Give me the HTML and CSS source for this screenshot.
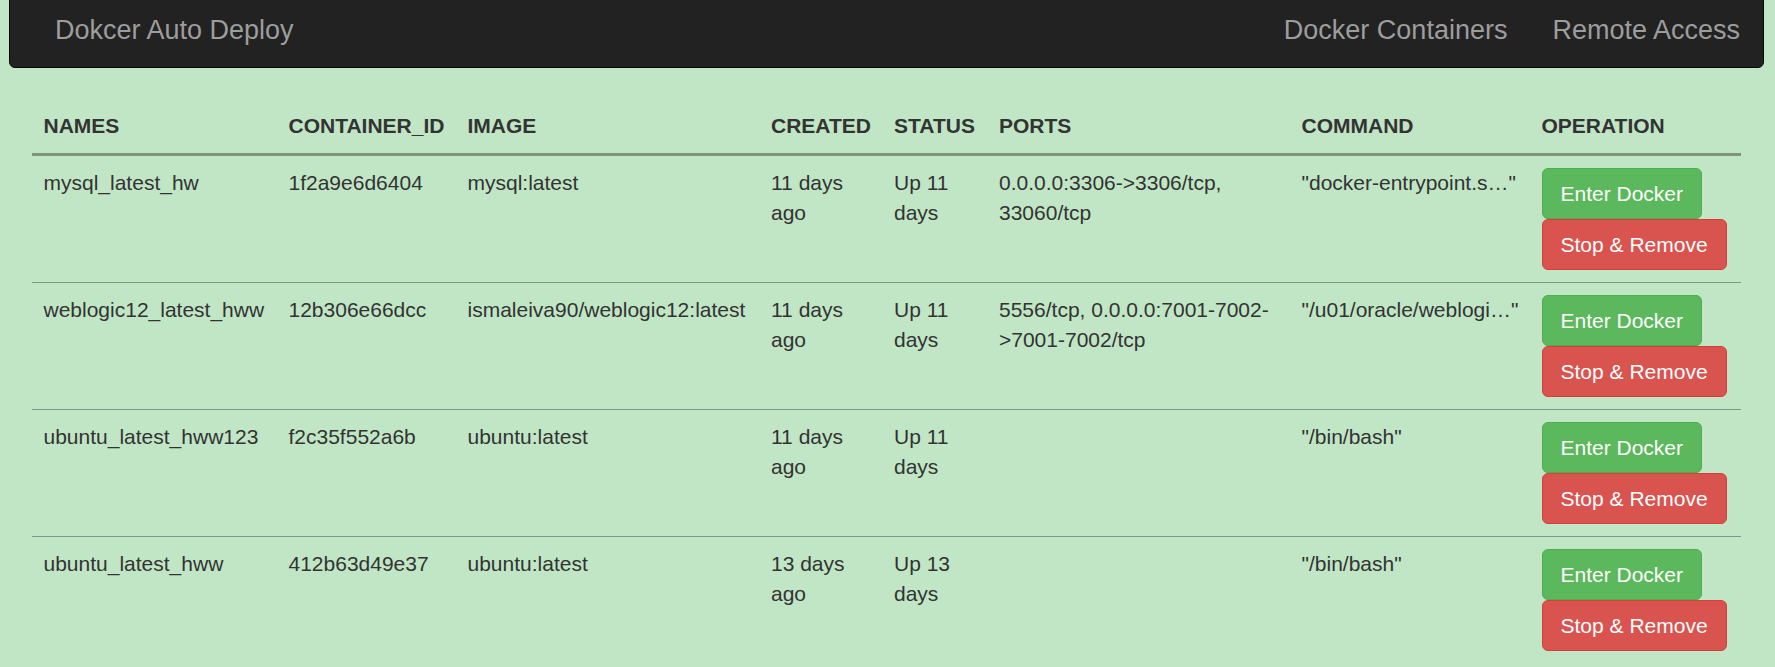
FILE: index.html
```html
<!DOCTYPE html>
<html lang="en">
<head>
<meta charset="utf-8">
<title>Dokcer Auto Deploy</title>
<link rel="stylesheet" href="styles.css">
</head>
<body>
<nav class="navbar">
  <a class="brand" href="#">Dokcer Auto Deploy</a>
  <ul class="nav">
    <li><a href="#">Docker Containers</a></li>
    <li><a href="#">Remote Access</a></li>
  </ul>
</nav>
<main class="content">
  <table class="table">
    <colgroup>
      <col class="c-names"><col class="c-id"><col class="c-image"><col class="c-created">
      <col class="c-status"><col class="c-ports"><col class="c-command"><col class="c-op">
    </colgroup>
    <thead>
      <tr>
        <th>NAMES</th><th>CONTAINER_ID</th><th>IMAGE</th><th>CREATED</th>
        <th>STATUS</th><th>PORTS</th><th>COMMAND</th><th>OPERATION</th>
      </tr>
    </thead>
    <tbody>
      <tr>
        <td>mysql_latest_hw</td>
        <td>1f2a9e6d6404</td>
        <td>mysql:latest</td>
        <td>11 days ago</td>
        <td>Up 11 days</td>
        <td>0.0.0.0:3306-&gt;3306/tcp, 33060/tcp</td>
        <td class="cmd">"docker-entrypoint.s…"</td>
        <td><div class="ops"><button class="btn btn-success">Enter Docker</button><button class="btn btn-danger">Stop &amp; Remove</button></div></td>
      </tr>
      <tr>
        <td>weblogic12_latest_hww</td>
        <td>12b306e66dcc</td>
        <td>ismaleiva90/weblogic12:latest</td>
        <td>11 days ago</td>
        <td>Up 11 days</td>
        <td>5556/tcp, 0.0.0.0:7001-7002-&gt;7001-7002/tcp</td>
        <td class="cmd">"/u01/oracle/weblogi…"</td>
        <td><div class="ops"><button class="btn btn-success">Enter Docker</button><button class="btn btn-danger">Stop &amp; Remove</button></div></td>
      </tr>
      <tr>
        <td>ubuntu_latest_hww123</td>
        <td>f2c35f552a6b</td>
        <td>ubuntu:latest</td>
        <td>11 days ago</td>
        <td>Up 11 days</td>
        <td></td>
        <td class="cmd">"/bin/bash"</td>
        <td><div class="ops"><button class="btn btn-success">Enter Docker</button><button class="btn btn-danger">Stop &amp; Remove</button></div></td>
      </tr>
      <tr>
        <td>ubuntu_latest_hww</td>
        <td>412b63d49e37</td>
        <td>ubuntu:latest</td>
        <td>13 days ago</td>
        <td>Up 13 days</td>
        <td></td>
        <td class="cmd">"/bin/bash"</td>
        <td><div class="ops"><button class="btn btn-success">Enter Docker</button><button class="btn btn-danger">Stop &amp; Remove</button></div></td>
      </tr>
    </tbody>
  </table>
</main>
</body>
</html>
```
FILE: styles.css
```css
* { box-sizing: border-box; }

html, body {
  margin: 0;
  padding: 0;
  background: #c1e6c6;
  font-family: "Liberation Sans", Arial, Helvetica, sans-serif;
  font-size: 21px;
  line-height: 30px;
  color: #333333;
  overflow: hidden;
}

.navbar {
  margin: -9px 11px 0 9px;
  height: 77px;
  background: #222222;
  border: 1px solid #080808;
  border-radius: 6px;
  display: flex;
  justify-content: space-between;
  align-items: flex-start;
  padding: 0 0 0 22.5px;
}

.brand {
  display: block;
  padding: 22.5px 22.5px;
  font-size: 27px;
  line-height: 30px;
  color: #9d9d9d;
  text-decoration: none;
}

.nav {
  list-style: none;
  margin: 0;
  padding: 0 0.5px 0 0;
  display: flex;
}

.nav a {
  display: block;
  padding: 22.5px 22.5px;
  font-size: 27px;
  line-height: 30px;
  color: #9d9d9d;
  text-decoration: none;
}

.content {
  padding: 31px 34.5px 0 31.5px;
}

.table {
  width: 100%;
  border-collapse: collapse;
  border-spacing: 0;
  table-layout: fixed;
}

.c-names { width: 245px; }
.c-id { width: 179px; }
.c-image { width: 303.5px; }
.c-created { width: 123px; }
.c-status { width: 105px; }
.c-ports { width: 302.5px; }
.c-command { width: 240px; }
.c-op { width: 211px; }

.table th {
  text-align: left;
  font-weight: bold;
  padding: 12px;
  vertical-align: bottom;
  border-bottom: 3px solid #7f9582;
}

.table td {
  padding: 12px;
  vertical-align: top;
  border-top: 1px solid #7f9582;
  word-wrap: break-word;
}

.table tbody tr:first-child td {
  border-top: 0;
}

.table td.cmd {
  white-space: nowrap;
}

.ops {
  display: flex;
  flex-direction: column;
  align-items: flex-start;
}

.btn {
  display: block;
  font-family: inherit;
  font-size: 21px;
  line-height: 30px;
  padding: 9.5px 18px;
  border: 1px solid transparent;
  border-radius: 6px;
  color: #ffffff;
  cursor: pointer;
  white-space: nowrap;
  margin: 0;
}

.btn-success {
  background: #5cb85c;
  border-color: #4cae4c;
}

.btn-danger {
  background: #d9534f;
  border-color: #d43f3a;
}
```
